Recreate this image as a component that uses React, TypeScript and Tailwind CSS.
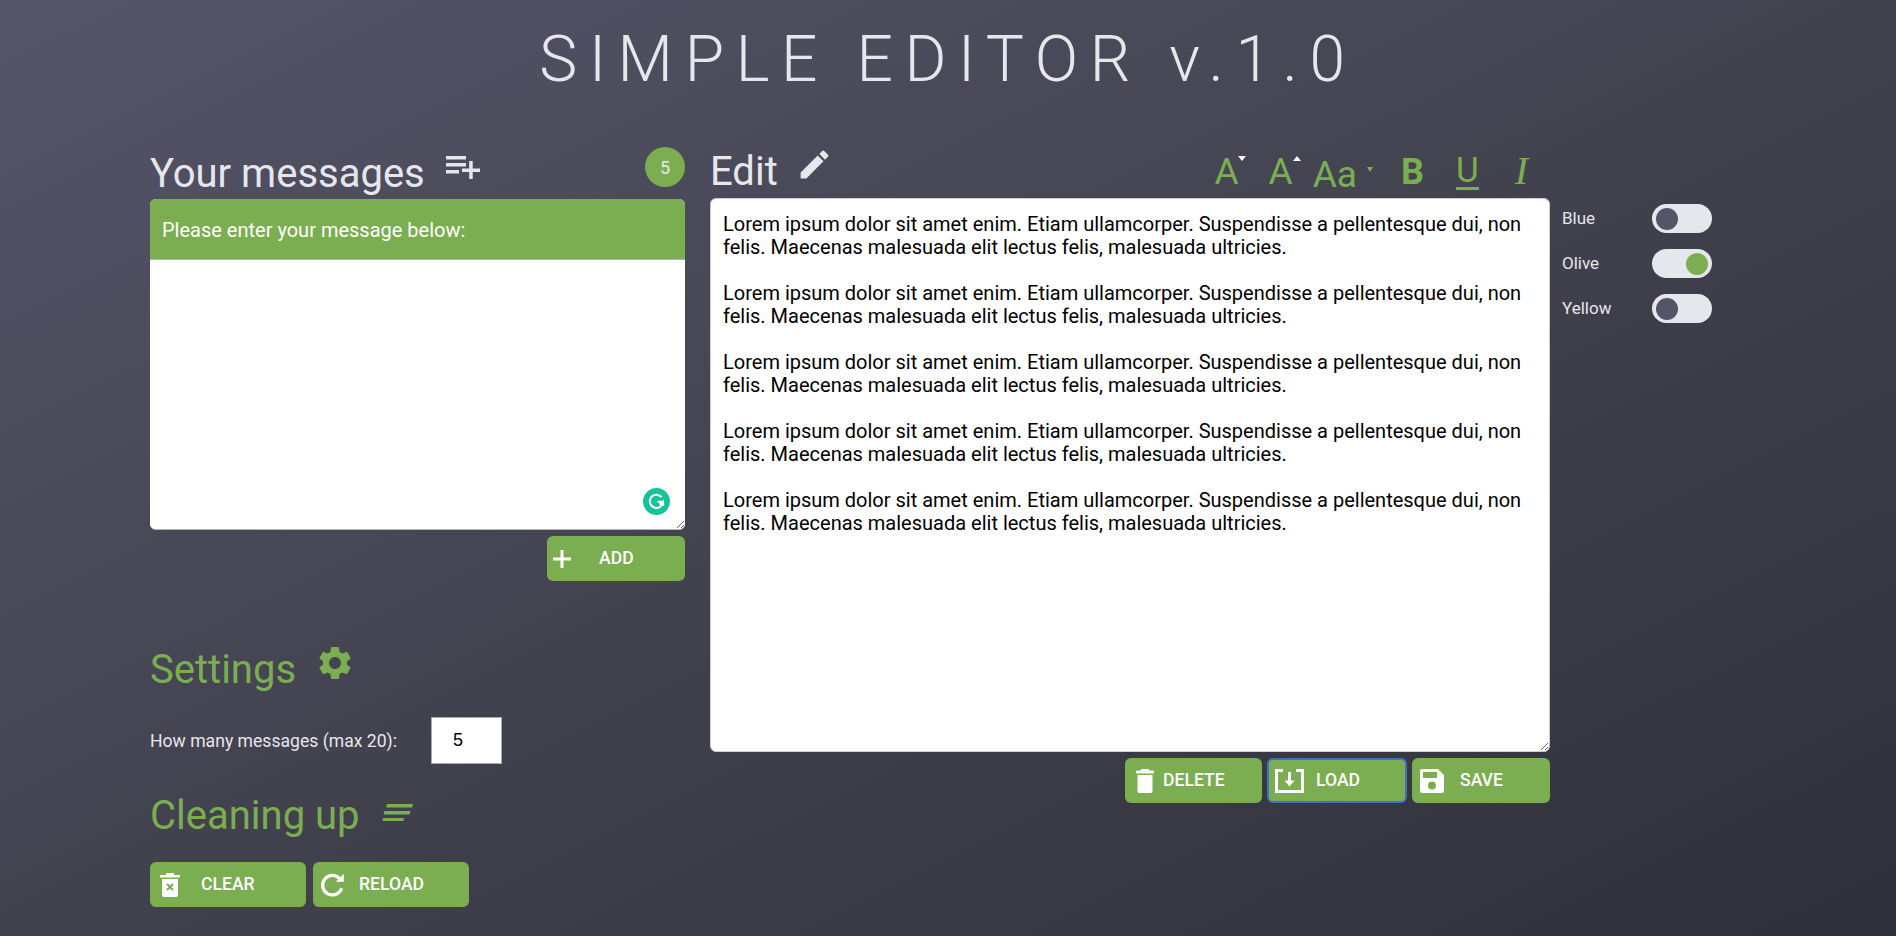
import { useState } from 'react';

const GREEN = '#7bae50';

function Btn({ icon, label, className }: { icon: React.ReactNode; label: string; className: string }) {
  return (
    <button className={`flex items-center h-[45px] rounded-[6px] bg-[#7bae50] text-white text-[17.6px] font-medium ${className}`}>
      {icon}
      <span>{label}</span>
    </button>
  );
}

function Toggle({ label, on, knob }: { label: string; on?: boolean; knob: string }) {
  return (
    <div className="flex items-center h-[29px] mb-[16px]">
      <span className="w-[90px] text-[17px] text-[#e6e7ec]">{label}</span>
      <span className={`flex items-center w-[60px] h-[29px] rounded-full bg-[#e6e7ec] px-[4px] ${on ? 'justify-end' : 'justify-start'}`}>
        <span className={`w-[22px] h-[22px] rounded-full ${knob}`} />
      </span>
    </div>
  );
}

const lorem = 'Lorem ipsum dolor sit amet enim. Etiam ullamcorper. Suspendisse a pellentesque dui, non felis. Maecenas malesuada elit lectus felis, malesuada ultricies.';

export default function App() {
  const [message, setMessage] = useState('');
  const [text, setText] = useState(Array(5).fill(lorem).join('\n\n'));
  const [count, setCount] = useState('5');

  return (
    <div className="w-[1896px] h-[936px] overflow-hidden bg-gradient-to-br from-[#555569] via-[#42424f] to-[#30303b] font-['Roboto',sans-serif]">
      <h1 className="pt-[22px] text-center text-[64px] leading-[75px] font-light tracking-[0.182em] text-[#e6e7ec]">SIMPLE EDITOR v.1.0</h1>

      <div className="flex pl-[150px] pt-[46px]">
        {/* left column */}
        <div className="w-[535px]">
          <div className="flex items-start justify-between h-[56px]">
            <div className="flex items-start">
              <h2 className="text-[40px] leading-[47px] mt-[7px] text-[#e6e7ec]">Your messages</h2>
              <svg className="ml-[20px] mt-[10px]" width="36" height="30" viewBox="0 0 36 30" fill="#e6e7ec">
                <rect x="1" y="3" width="20" height="3.5" />
                <rect x="1" y="10" width="20" height="3.5" />
                <rect x="1" y="17" width="13" height="3.5" />
                <rect x="17" y="15.5" width="18" height="3.5" />
                <rect x="24.2" y="8" width="3.5" height="18" />
              </svg>
            </div>
            <span className="flex items-center justify-center w-[40px] h-[40px] mt-[4px] rounded-full bg-[#7bae50] text-[18px] text-[#e6e7ec]">5</span>
          </div>
          <div className="rounded-[6px] overflow-hidden bg-white relative border-b border-[#b5b5b5]">
            <div className="h-[61px] flex items-center px-[12px] pt-[2px] bg-[#7bae50] border-b border-[#a9b6a0] text-[20px] text-white">Please enter your message below:</div>
            <textarea value={message} onChange={(e) => setMessage(e.target.value)} className="block w-full h-[269px] bg-white outline-none p-[12px]" />
            <span className="absolute right-[15px] bottom-[14px] flex items-center justify-center w-[27px] h-[27px] rounded-full bg-[#15c39a]">
              <svg width="17" height="17" viewBox="0 0 17 17" fill="none" stroke="white" strokeWidth="2">
                <path d="M13.6 4.2A6.6 6.6 0 1 0 15 8.8H9.5" />
                <path d="M11.6 11.5 15 8.8l.3 4" />
              </svg>
            </span>
          </div>
          <div className="flex justify-end mt-[6px]">
            <Btn
              label="ADD"
              className="w-[138px] pl-[5px] gap-[27px]"
              icon={
                <svg width="20" height="20" viewBox="0 0 20 20" fill="white"><rect x="1" y="8.5" width="18" height="3" /><rect x="8.5" y="1" width="3" height="18" /></svg>
              }
            />
          </div>

          <div className="flex items-start mt-[65px]">
            <h2 className="text-[40px] leading-[47px] text-[#7bae50]">Settings</h2>
            <svg className="ml-[19px] mt-[-3px]" width="40" height="40" viewBox="0 0 24 24" fill={GREEN}>
              <path d="M19.14 12.94c.04-.3.06-.61.06-.94 0-.32-.02-.64-.07-.94l2.03-1.58a.49.49 0 0 0 .12-.61l-1.92-3.32a.488.488 0 0 0-.59-.22l-2.39.96c-.5-.38-1.03-.7-1.62-.94l-.36-2.54a.484.484 0 0 0-.48-.41h-3.84c-.24 0-.43.17-.47.41l-.36 2.54c-.59.24-1.13.57-1.62.94l-2.39-.96c-.22-.08-.47 0-.59.22L2.74 8.87c-.12.21-.08.47.12.61l2.03 1.58c-.05.3-.09.63-.09.94s.02.64.07.94l-2.03 1.58a.49.49 0 0 0-.12.61l1.92 3.32c.12.22.37.29.59.22l2.39-.96c.5.38 1.03.7 1.62.94l.36 2.54c.05.24.24.41.48.41h3.84c.24 0 .44-.17.47-.41l.36-2.54c.59-.24 1.13-.56 1.62-.94l2.39.96c.22.08.47 0 .59-.22l1.92-3.32c.12-.22.07-.47-.12-.61l-2.01-1.58zM12 15.6c-1.98 0-3.6-1.62-3.6-3.6s1.62-3.6 3.6-3.6 3.6 1.62 3.6 3.6-1.62 3.6-3.6 3.6z" />
            </svg>
          </div>
          <div className="flex items-center mt-[24px]">
            <label className="w-[281px] pt-[2px] text-[17.6px] text-[#e6e7ec]">How many messages (max 20):</label>
            <input value={count} onChange={(e) => setCount(e.target.value)} className="w-[71px] h-[47px] bg-white border border-[#aaa] pl-[21px] text-[18px] font-['Liberation_Sans',sans-serif] text-black outline-none" />
          </div>
          <div className="flex items-start mt-[28px]">
            <h2 className="text-[40px] leading-[47px] text-[#7bae50]">Cleaning up</h2>
            <svg className="ml-[22px] mt-[9px]" width="32" height="22" viewBox="0 0 32 22" fill={GREEN}>
              <path d="M5 3h26l-1 3.5H4zM2.5 10h26l-1 3.5H1.500zM1 17h21l-.5 3H.5z" />
            </svg>
          </div>
          <div className="flex gap-[7px] mt-[23px]">
            <Btn
              label="CLEAR"
              className="w-[156px] pl-[10px] gap-[21px] font-bold"
              icon={
                <svg width="20" height="24" viewBox="0 0 20 24" fill="white">
                  <rect x="0" y="2" width="20" height="2.500" />
                  <rect x="6" y="0" width="8" height="2.500" />
                  <path d="M2 6h16v16a2 2 0 0 1-2 2H4a2 2 0 0 1-2-2z" />
                  <path d="M7 11l6 6M13 11l-6 6" stroke={GREEN} strokeWidth="2" />
                </svg>
              }
            />
            <Btn
              label="RELOAD"
              className="w-[156px] pl-[7px] gap-[13px] font-bold"
              icon={
                <svg width="26" height="26" viewBox="0 0 24 24" fill="none" stroke="white" strokeWidth="3">
                  <path d="M20 15a9 9 0 1 1-2-9" />
                  <path d="M22 1.500V9h-7.500z" fill="white" stroke="none" />
                </svg>
              }
            />
          </div>
        </div>

        {/* editor column */}
        <div className="w-[840px] ml-[25px]">
          <div className="flex items-start justify-between h-[55px]">
            <div className="flex items-start">
              <h2 className="text-[40px] leading-[47px] mt-[5px] text-[#e6e7ec]">Edit</h2>
              <svg className="ml-[18px] mt-[3px]" width="37" height="37" viewBox="0 0 24 24" fill="#e6e7ec">
                <path d="M3 17.250V21h3.750L17.810 9.940l-3.750-3.750L3 17.250zM20.710 7.040a1 1 0 0 0 0-1.410l-2.340-2.340a1 1 0 0 0-1.410 0l-1.830 1.830 3.750 3.750 1.830-1.830z" />
              </svg>
            </div>
            <div className="flex items-start text-[#7bae50] mr-[22px]">
              <span className="relative text-[37px] leading-[43px] mt-[7px]">A<span className="absolute left-[24px] top-[6px] w-0 h-0 border-x-[4px] border-x-transparent border-t-[5px] border-t-white" /></span>
              <span className="relative text-[37px] leading-[43px] mt-[7px] ml-[30px]">A<span className="absolute left-[24px] top-[6px] w-0 h-0 border-x-[4px] border-x-transparent border-b-[5px] border-b-white" /></span>
              <span className="text-[37px] leading-[43px] mt-[10px] ml-[20px]">Aa</span>
              <span className="w-0 h-0 mt-[24px] ml-[10px] border-x-[3px] border-x-transparent border-t-[5px] border-t-[#7bae50]" />
              <span className="text-[36px] leading-[42px] font-bold mt-[8px] ml-[28px]">B</span>
              <span className="text-[35px] leading-[32px] mt-[12px] ml-[32px] border-b-[3px] border-[#7bae50]">U</span>
              <span className="text-[40px] leading-[44px] font-['Liberation_Serif',serif] italic mt-[6px] ml-[36px]">I</span>
            </div>
          </div>
          <textarea
            value={text}
            onChange={(e) => setText(e.target.value)}
            className="block w-full h-[554px] rounded-[6px] bg-white border border-[#ccc] pl-[12px] pr-[20px] py-[14px] text-[20px] leading-[23px] text-black outline-none"
          />
          <div className="flex justify-end gap-[5px] mt-[6px]">
            <Btn
              label="DELETE"
              className="w-[137px] pl-[11px] gap-[9px]"
              icon={
                <svg width="18" height="24" viewBox="0 0 18 24" fill="white">
                  <rect x="0" y="1.500" width="18" height="3" rx="1" />
                  <rect x="5" y="0" width="8" height="2.500" />
                  <path d="M1.500 6h15v16a2 2 0 0 1-2 2h-11a2 2 0 0 1-2-2z" />
                </svg>
              }
            />
            <Btn
              label="LOAD"
              className="w-[140px] pl-[6px] gap-[12px] border-2 border-[#3f72c4]"
              icon={
                <svg width="29" height="24" viewBox="0 0 29 24" fill="none" stroke="white" strokeWidth="3">
                  <path d="M8 1.500H1.500v21h26v-21H21" />
                  <path d="M14.500 3v11" />
                  <path d="M9.500 11.500h10l-5 6z" fill="white" stroke="none" />
                </svg>
              }
            />
            <Btn
              label="SAVE"
              className="w-[138px] pl-[8px] gap-[16px]"
              icon={
                <svg width="24" height="24" viewBox="0 0 24 24" fill="white">
                  <path fillRule="evenodd" d="M2 0h16l6 6v16a2 2 0 0 1-2 2H2a2 2 0 0 1-2-2V2a2 2 0 0 1 2-2zM3 3v6h14V3zM12 12.500a4 4 0 1 0 0 8 4 4 0 0 0 0-8z" />
                </svg>
              }
            />
          </div>
        </div>

        {/* theme toggles */}
        <div className="ml-[12px] pt-[61px] w-[150px]">
          <Toggle label="Blue" knob="bg-[#555569]" />
          <Toggle label="Olive" on knob="bg-[#7bae50]" />
          <Toggle label="Yellow" knob="bg-[#555569]" />
        </div>
      </div>
    </div>
  );
}
